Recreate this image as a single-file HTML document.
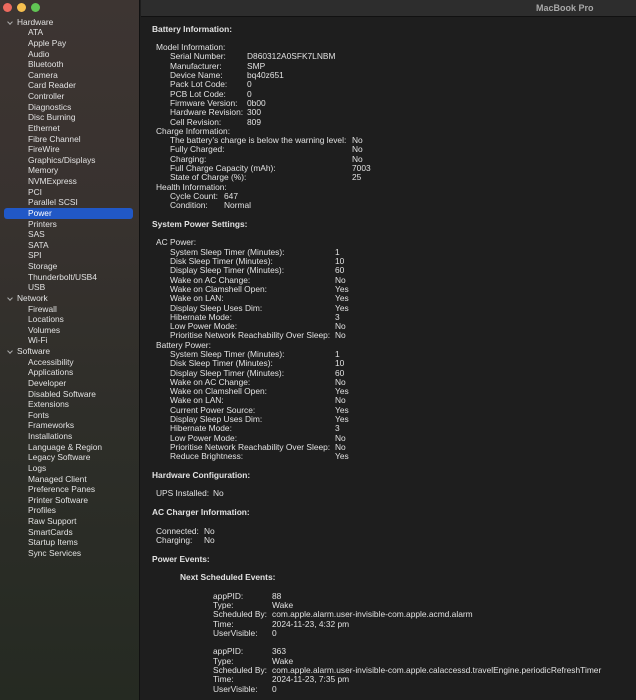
<!DOCTYPE html>
<html><head><meta charset="utf-8"><style>
*{margin:0;padding:0;box-sizing:border-box}
body{width:636px;height:700px;overflow:hidden;background:#1e1e1e;font-family:"Liberation Sans",sans-serif;font-size:8.4px;color:#e2e2e2;position:relative}
#sb{position:absolute;left:0;top:0;width:140px;height:700px;background:linear-gradient(180deg,#3d3532 0%,#38322f 30%,#2e2e29 60%,#252a22 100%);border-right:1px solid #111}
.tl{position:absolute;top:3px;width:9px;height:9px;border-radius:50%}
#tb{position:absolute;left:141px;top:0;right:0;height:17px;background:#2d2d2d;border-bottom:1px solid #111}
#tb span{position:absolute;left:395px;top:3px;font-weight:bold;font-size:9px;color:#a8a8a8}
#side{position:absolute;top:16.7px;left:0;width:140px}
#side div{height:10.63px;line-height:10.63px;padding-left:28px;white-space:nowrap;color:#e2e2e2}
#side div.h{padding-left:17px;position:relative}
#side div.h:before{content:"";position:absolute;left:8px;top:3px;width:3px;height:3px;border-right:1px solid #aaa;border-bottom:1px solid #aaa;transform:rotate(45deg)}
#side div.sel{background:#2158c6;margin:0 7px 0 4px;padding-left:24px;border-radius:3px;color:#fff}
#main{position:absolute;top:24.6px;left:0;width:636px}
.r{position:relative;height:9.3px;line-height:9.3px;white-space:nowrap}
.r i,.r b{position:absolute;top:0;font-style:normal;font-weight:normal}
.r b.hd,.r i.hd{font-weight:bold}
</style></head><body>
<div id="sb">
<div class="tl" style="left:3px;background:#ed6a5e"></div>
<div class="tl" style="left:17px;background:#f5bf4f"></div>
<div class="tl" style="left:31px;background:#61c554"></div>
<div id="side">
<div class="h">Hardware</div>
<div>ATA</div><div>Apple Pay</div><div>Audio</div><div>Bluetooth</div><div>Camera</div><div>Card Reader</div><div>Controller</div><div>Diagnostics</div><div>Disc Burning</div><div>Ethernet</div><div>Fibre Channel</div><div>FireWire</div><div>Graphics/Displays</div><div>Memory</div><div>NVMExpress</div><div>PCI</div><div>Parallel SCSI</div><div class="sel">Power</div><div>Printers</div><div>SAS</div><div>SATA</div><div>SPI</div><div>Storage</div><div>Thunderbolt/USB4</div><div>USB</div>
<div class="h">Network</div>
<div>Firewall</div><div>Locations</div><div>Volumes</div><div>Wi-Fi</div>
<div class="h">Software</div>
<div>Accessibility</div><div>Applications</div><div>Developer</div><div>Disabled Software</div><div>Extensions</div><div>Fonts</div><div>Frameworks</div><div>Installations</div><div>Language &amp; Region</div><div>Legacy Software</div><div>Logs</div><div>Managed Client</div><div>Preference Panes</div><div>Printer Software</div><div>Profiles</div><div>Raw Support</div><div>SmartCards</div><div>Startup Items</div><div>Sync Services</div>
</div>
</div>
<div id="tb"><span>MacBook Pro</span></div>
<div id="main">
<div class="r"><i class="hd" style="left:152px">Battery Information:</i></div>
<div class="r"></div>
<div class="r"><i style="left:156px">Model Information:</i></div>
<div class="r"><i style="left:170px">Serial Number:</i><b style="left:247px">D860312A0SFK7LNBM</b></div>
<div class="r"><i style="left:170px">Manufacturer:</i><b style="left:247px">SMP</b></div>
<div class="r"><i style="left:170px">Device Name:</i><b style="left:247px">bq40z651</b></div>
<div class="r"><i style="left:170px">Pack Lot Code:</i><b style="left:247px">0</b></div>
<div class="r"><i style="left:170px">PCB Lot Code:</i><b style="left:247px">0</b></div>
<div class="r"><i style="left:170px">Firmware Version:</i><b style="left:247px">0b00</b></div>
<div class="r"><i style="left:170px">Hardware Revision:</i><b style="left:247px">300</b></div>
<div class="r"><i style="left:170px">Cell Revision:</i><b style="left:247px">809</b></div>
<div class="r"><i style="left:156px">Charge Information:</i></div>
<div class="r"><i style="left:170px">The battery’s charge is below the warning level:</i><b style="left:352px">No</b></div>
<div class="r"><i style="left:170px">Fully Charged:</i><b style="left:352px">No</b></div>
<div class="r"><i style="left:170px">Charging:</i><b style="left:352px">No</b></div>
<div class="r"><i style="left:170px">Full Charge Capacity (mAh):</i><b style="left:352px">7003</b></div>
<div class="r"><i style="left:170px">State of Charge (%):</i><b style="left:352px">25</b></div>
<div class="r"><i style="left:156px">Health Information:</i></div>
<div class="r"><i style="left:170px">Cycle Count:</i><b style="left:224px">647</b></div>
<div class="r"><i style="left:170px">Condition:</i><b style="left:224px">Normal</b></div>
<div class="r"></div>
<div class="r"><i class="hd" style="left:152px">System Power Settings:</i></div>
<div class="r"></div>
<div class="r"><i style="left:156px">AC Power:</i></div>
<div class="r"><i style="left:170px">System Sleep Timer (Minutes):</i><b style="left:335px">1</b></div>
<div class="r"><i style="left:170px">Disk Sleep Timer (Minutes):</i><b style="left:335px">10</b></div>
<div class="r"><i style="left:170px">Display Sleep Timer (Minutes):</i><b style="left:335px">60</b></div>
<div class="r"><i style="left:170px">Wake on AC Change:</i><b style="left:335px">No</b></div>
<div class="r"><i style="left:170px">Wake on Clamshell Open:</i><b style="left:335px">Yes</b></div>
<div class="r"><i style="left:170px">Wake on LAN:</i><b style="left:335px">Yes</b></div>
<div class="r"><i style="left:170px">Display Sleep Uses Dim:</i><b style="left:335px">Yes</b></div>
<div class="r"><i style="left:170px">Hibernate Mode:</i><b style="left:335px">3</b></div>
<div class="r"><i style="left:170px">Low Power Mode:</i><b style="left:335px">No</b></div>
<div class="r"><i style="left:170px">Prioritise Network Reachability Over Sleep:</i><b style="left:335px">No</b></div>
<div class="r"><i style="left:156px">Battery Power:</i></div>
<div class="r"><i style="left:170px">System Sleep Timer (Minutes):</i><b style="left:335px">1</b></div>
<div class="r"><i style="left:170px">Disk Sleep Timer (Minutes):</i><b style="left:335px">10</b></div>
<div class="r"><i style="left:170px">Display Sleep Timer (Minutes):</i><b style="left:335px">60</b></div>
<div class="r"><i style="left:170px">Wake on AC Change:</i><b style="left:335px">No</b></div>
<div class="r"><i style="left:170px">Wake on Clamshell Open:</i><b style="left:335px">Yes</b></div>
<div class="r"><i style="left:170px">Wake on LAN:</i><b style="left:335px">No</b></div>
<div class="r"><i style="left:170px">Current Power Source:</i><b style="left:335px">Yes</b></div>
<div class="r"><i style="left:170px">Display Sleep Uses Dim:</i><b style="left:335px">Yes</b></div>
<div class="r"><i style="left:170px">Hibernate Mode:</i><b style="left:335px">3</b></div>
<div class="r"><i style="left:170px">Low Power Mode:</i><b style="left:335px">No</b></div>
<div class="r"><i style="left:170px">Prioritise Network Reachability Over Sleep:</i><b style="left:335px">No</b></div>
<div class="r"><i style="left:170px">Reduce Brightness:</i><b style="left:335px">Yes</b></div>
<div class="r"></div>
<div class="r"><i class="hd" style="left:152px">Hardware Configuration:</i></div>
<div class="r"></div>
<div class="r"><i style="left:156px">UPS Installed:</i><b style="left:213px">No</b></div>
<div class="r"></div>
<div class="r"><i class="hd" style="left:152px">AC Charger Information:</i></div>
<div class="r"></div>
<div class="r"><i style="left:156px">Connected:</i><b style="left:204px">No</b></div>
<div class="r"><i style="left:156px">Charging:</i><b style="left:204px">No</b></div>
<div class="r"></div>
<div class="r"><i class="hd" style="left:152px">Power Events:</i></div>
<div class="r"></div>
<div class="r"><i class="hd" style="left:180px">Next Scheduled Events:</i></div>
<div class="r"></div>
<div class="r"><i style="left:213px">appPID:</i><b style="left:272px">88</b></div>
<div class="r"><i style="left:213px">Type:</i><b style="left:272px">Wake</b></div>
<div class="r"><i style="left:213px">Scheduled By:</i><b style="left:272px">com.apple.alarm.user-invisible-com.apple.acmd.alarm</b></div>
<div class="r"><i style="left:213px">Time:</i><b style="left:272px">2024-11-23, 4:32 pm</b></div>
<div class="r"><i style="left:213px">UserVisible:</i><b style="left:272px">0</b></div>
<div class="r"></div>
<div class="r"><i style="left:213px">appPID:</i><b style="left:272px">363</b></div>
<div class="r"><i style="left:213px">Type:</i><b style="left:272px">Wake</b></div>
<div class="r"><i style="left:213px">Scheduled By:</i><b style="left:272px">com.apple.alarm.user-invisible-com.apple.calaccessd.travelEngine.periodicRefreshTimer</b></div>
<div class="r"><i style="left:213px">Time:</i><b style="left:272px">2024-11-23, 7:35 pm</b></div>
<div class="r"><i style="left:213px">UserVisible:</i><b style="left:272px">0</b></div>
</div>
</body></html>
